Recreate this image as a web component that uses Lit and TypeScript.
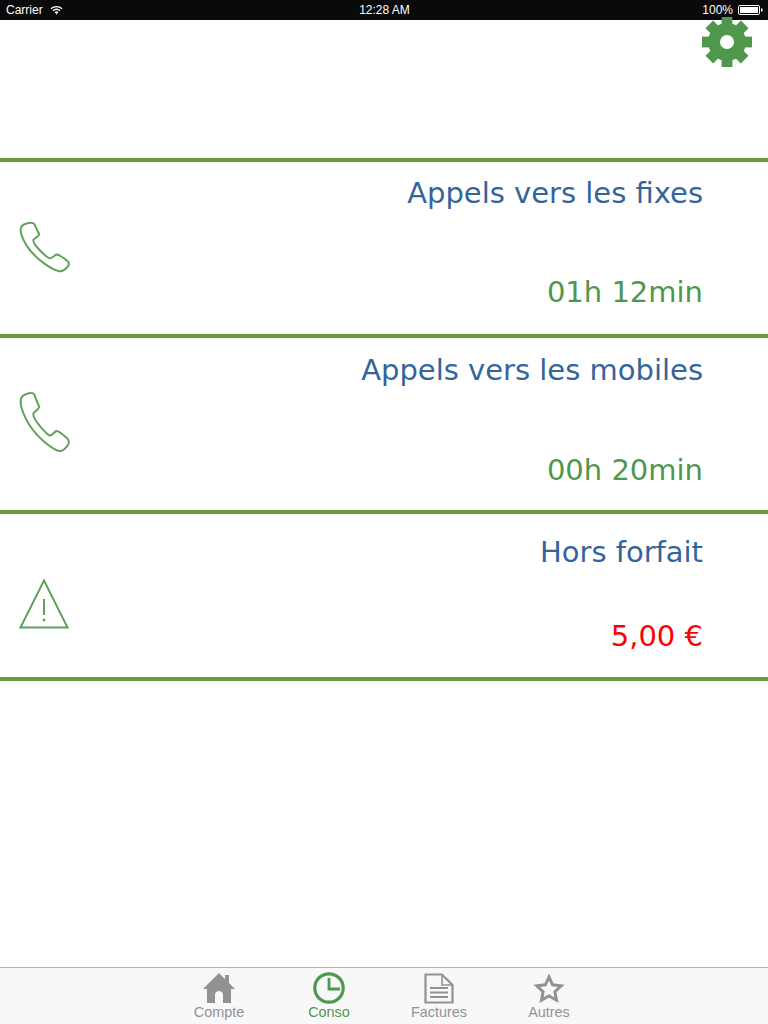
import { LitElement, html, svg, css } from "lit";
import { customElement } from "lit/decorators.js";

const PHONE_PATH =
  "M60 60 C60 50 68 43 76 41 C86 38 98 36 102 42 C106 50 110 60 117 72 C118 76 108 82 100 88 C97 92 100 98 106 106 C118 120 134 136 148 144 C156 146 162 136 170 133 C178 132 190 142 204 152 C210 158 210 164 204 170 C198 176 190 184 180 183 C168 182 150 172 130 158 C108 142 88 122 76 102 C66 86 60 72 60 60 Z";

const GEAR_TEETH = [0, 45, 90, 135, 180, 225, 270, 315];

const phoneIcon = (cls: string) => html`
  <svg class="line-icon ${cls}" viewBox="55 33 160 155" preserveAspectRatio="none">
    <path d="${PHONE_PATH}" vector-effect="non-scaling-stroke"></path>
  </svg>
`;

const warningIcon = html`
  <svg class="line-icon warning" viewBox="0 0 50 50">
    <path d="M25 1.5 L48.5 48.5 H1.5 Z"></path>
    <path d="M25 20 V36"></path>
    <circle class="dot" cx="25" cy="41" r="1.4"></circle>
  </svg>
`;

const tabIcons: Record<string, unknown> = {
  home: html`<svg viewBox="0 0 32 30" width="32" height="30">
    <path fill="currentColor" d="M16 0 L22 6 V2 H26 V10 L32 16 H28 V30 H20 V22 C20 19 18 18 16 18 C14 18 12 19 12 22 V30 H4 V16 H0 Z"></path>
  </svg>`,
  clock: html`<svg viewBox="0 0 32 32" width="32" height="32">
    <circle cx="16" cy="16" r="14.2" fill="none" stroke="currentColor" stroke-width="3.2"></circle>
    <path d="M16 6 V17 H27" fill="none" stroke="currentColor" stroke-width="2.8"></path>
  </svg>`,
  doc: html`<svg viewBox="0 0 30 31" width="30" height="31" fill="none" stroke="currentColor">
    <path stroke-width="2.2" d="M1.5 1.5 H18 L28.5 12 V29.5 H1.5 Z"></path>
    <path stroke-width="1.6" d="M18 1.5 V12 H28.5"></path>
    <path stroke-width="2" d="M6 15 H24 M6 19.5 H24 M6 24 H24"></path>
  </svg>`,
  star: html`<svg viewBox="0 0 32 31" width="32" height="31">
    <path fill="none" stroke="currentColor" stroke-width="3" stroke-linejoin="miter" d="M16 4 L19.6 11.8 L28.2 12.8 L21.9 18.7 L23.5 27.2 L16 23 L8.5 27.2 L10.1 18.7 L3.8 12.8 L12.4 11.8 Z"></path>
  </svg>`,
};

@customElement("app-root")
export class AppRoot extends LitElement {
  static styles = css`
    :host {
      display: block;
      width: 768px;
      height: 1024px;
      position: relative;
      overflow: hidden;
      background: #ffffff;
      display: flex;
      flex-direction: column;
    }

    .status-bar {
      height: 20px;
      flex: none;
      background: #0a0a0a;
      color: #ffffff;
      font: 12px "Liberation Sans", Arial, sans-serif;
      display: grid;
      grid-template-columns: 1fr auto 1fr;
      align-items: center;
      padding: 0 5px 0 6px;
    }

    .status-left,
    .status-right {
      display: flex;
      align-items: center;
      gap: 7px;
    }

    .status-right {
      justify-content: flex-end;
      gap: 5px;
    }

    .gear {
      position: absolute;
      top: 17px;
      left: 702px;
      width: 50px;
      height: 50px;
    }

    .header {
      height: 138px;
      flex: none;
    }

    .rows {
      flex: none;
      border-top: 4px solid #6a9a42;
    }

    .row {
      display: flex;
      box-sizing: border-box;
      border-bottom: 4px solid #6a9a42;
      padding: 0 65px 0 19px;
      font-family: "DejaVu Sans", Verdana, sans-serif;
    }

    .row-a {
      height: 176px;
    }

    .row-b {
      height: 176px;
    }

    .row-c {
      height: 167px;
    }

    .icon-cell {
      width: 56px;
      display: flex;
      align-items: flex-start;
    }

    .line-icon {
      display: block;
      fill: none;
      stroke: #5fa35b;
      stroke-width: 2;
    }

    .line-icon .dot {
      fill: #5fa35b;
      stroke: none;
    }

    .line-icon.short {
      width: 52px;
      height: 52px;
      margin-top: 59px;
    }

    .line-icon.tall {
      width: 52px;
      height: 62px;
      margin-top: 53px;
    }

    .line-icon.warning {
      width: 50px;
      height: 50px;
      margin-top: 65px;
    }

    .text-cell {
      flex: 1;
      display: flex;
      flex-direction: column;
      justify-content: space-between;
      align-items: flex-end;
      font-size: 29px;
      line-height: 34px;
    }

    .row-a .text-cell {
      padding: 14px 0 25px;
    }

    .row-b .text-cell {
      padding: 15px 0 23px;
    }

    .row-c .text-cell {
      padding: 21px 0 24px;
    }

    .title {
      color: #33659b;
    }

    .value {
      color: #4f974c;
    }

    .value.alert {
      color: #ff0000;
    }

    .spacer {
      flex: 1;
    }

    .tab-bar {
      flex: none;
      height: 56px;
      border-top: 1px solid #b4b4b4;
      background: #f8f8f8;
      display: flex;
      justify-content: center;
      font: 14.4px "Liberation Sans", Arial, sans-serif;
    }

    .tab {
      width: 110px;
      height: 56px;
      color: #929292;
      display: flex;
      flex-direction: column;
      align-items: center;
    }

    .tab.active {
      color: #4f974c;
    }

    .tab-icon {
      height: 32px;
      margin-top: 4px;
      display: flex;
      align-items: center;
    }

    .tab-label {
      line-height: 15px;
      margin-top: 1px;
    }
  `;

  private rows = [
    { cls: "row-a", icon: phoneIcon("short"), title: "Appels vers les fixes", value: "01h 12min", alert: false },
    { cls: "row-b", icon: phoneIcon("tall"), title: "Appels vers les mobiles", value: "00h 20min", alert: false },
    { cls: "row-c", icon: warningIcon, title: "Hors forfait", value: "5,00 €", alert: true },
  ];

  private tabs = [
    { icon: "home", label: "Compte", active: false },
    { icon: "clock", label: "Conso", active: true },
    { icon: "doc", label: "Factures", active: false },
    { icon: "star", label: "Autres", active: false },
  ];

  render() {
    return html`
      <div class="status-bar">
        <div class="status-left">
          <span>Carrier</span>
          <svg viewBox="0 0 14 10" width="13" height="10" fill="none" stroke="#fff" stroke-width="1.4">
            <path d="M1 3.6 C4.4 0.6 9.6 0.6 13 3.6"></path>
            <path d="M3.2 5.8 C5.4 3.9 8.6 3.9 10.8 5.8"></path>
            <path d="M5.4 7.9 C6.3 7.1 7.7 7.1 8.6 7.9"></path>
            <circle cx="7" cy="9" r="0.8" fill="#fff" stroke="none"></circle>
          </svg>
        </div>
        <span>12:28 AM</span>
        <div class="status-right">
          <span>100%</span>
          <svg viewBox="0 0 25 10" width="25" height="10">
            <rect x="0.5" y="0.5" width="21" height="9" rx="1.5" fill="none" stroke="#fff"></rect>
            <rect x="2" y="2" width="18" height="6" fill="#fff"></rect>
            <rect x="23" y="3.5" width="1.5" height="3" fill="#fff"></rect>
          </svg>
        </div>
      </div>

      <svg class="gear" viewBox="0 0 50 50">
        <circle cx="25" cy="25" r="19" fill="#4f974c"></circle>
        ${GEAR_TEETH.map(
          (deg) => svg`<rect x="19.6" y="0" width="10.8" height="12" fill="#4f974c" transform="rotate(${deg} 25 25)"></rect>`
        )}
        <circle cx="25" cy="25" r="7" fill="#ffffff"></circle>
      </svg>

      <div class="header"></div>

      <div class="rows">
        ${this.rows.map(
          (row) => html`
            <div class="row ${row.cls}">
              <div class="icon-cell">${row.icon}</div>
              <div class="text-cell">
                <span class="title">${row.title}</span>
                <span class="value ${row.alert ? "alert" : ""}">${row.value}</span>
              </div>
            </div>
          `
        )}
      </div>

      <div class="spacer"></div>

      <div class="tab-bar">
        ${this.tabs.map(
          (tab) => html`
            <div class="tab ${tab.active ? "active" : ""}">
              <div class="tab-icon">${tabIcons[tab.icon]}</div>
              <span class="tab-label">${tab.label}</span>
            </div>
          `
        )}
      </div>
    `;
  }
}
